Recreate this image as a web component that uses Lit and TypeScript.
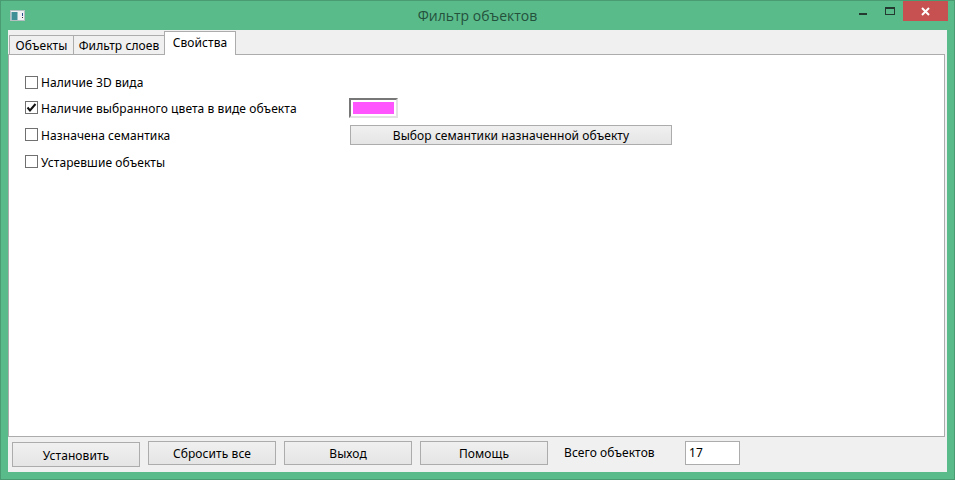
import { LitElement, html, css } from "lit";
import { customElement } from "lit/decorators.js";

@customElement("app-root")
export class AppRoot extends LitElement {
  static styles = css`
    :host { display: block; width: 955px; height: 480px; }
    * { box-sizing: border-box; }
    .win {
      width: 955px; height: 480px; background: #5abb8a; border: 1px solid #4a9a72;
      display: flex; flex-direction: column; padding: 0 7px 7px 7px;
      font-family: "Noto Sans", sans-serif; font-size: 12px; letter-spacing: 0.08px; color: #000;
    }
    .title { height: 29px; flex: none; display: flex; align-items: center; position: relative; }
    .app-icon { width: 15px; height: 11px; margin-left: 2px; margin-top: -1px; flex: none; display: block; }
    .caption {
      position: absolute; left: 0; right: 0; top: 6px; text-align: center; letter-spacing: 0;
      font-family: "Open Sans", sans-serif; font-size: 14px; line-height: 18px; color: #24513c;
    }
    .controls { position: absolute; right: -1px; top: 0; display: flex; align-items: flex-start; }
    .min { width: 8px; height: 2px; background: #243a30; margin-top: 12px; margin-right: 18px; }
    .max { width: 10px; height: 8px; border: 1px solid #243a30; border-top-width: 2px; margin-top: 6px; margin-right: 8px; }
    .close { width: 45px; height: 20px; background: #c75050; display: flex; align-items: center; justify-content: center; }
    .client { flex: 1; background: #f0f0f0; display: flex; flex-direction: column; padding: 1px 2px 0 0; }
    .tabs { display: flex; align-items: flex-end; height: 24px; flex: none; padding-left: 1px; position: relative; z-index: 1; margin-bottom: -1px; }
    .tab { height: 20px; background: #f0f0f0; border: 1px solid #acacac; display: flex; align-items: center; justify-content: center; margin-right: -1px; }
    .t1 { width: 65px; }
    .t2 { width: 92px; }
    .t3 { width: 72px; height: 24px; background: #fff; border-bottom: 0; padding-bottom: 2px; margin-right: 0; }
    .pane { height: 383px; flex: none; background: #fff; border: 1px solid #acacac; padding: 14px 0 0 16px; display: grid; grid-template-columns: 325px 322px; grid-auto-rows: min-content; align-items: center; }
    .check { display: flex; align-items: center; gap: 3px; white-space: nowrap; height: 100%; }
    .r0 { height: 27px; }
    .r1 { height: 24px; }
    .r2 { height: 30px; }
    .r3 { height: 24px; }
    .box { width: 13px; height: 13px; margin-top: -1px; border: 1px solid #707070; background: #fff; flex: none; display: flex; }
    .box svg { display: block; }
    .swatch { width: 49px; height: 20px; margin-left: -1px; border: 2px solid; border-color: #777 #e3e3e3 #e3e3e3 #777; padding: 2px; background: #fff; }
    .swatch div { width: 100%; height: 100%; background: #ff55ff; }
    button { font: inherit; letter-spacing: inherit; color: #000; border: 1px solid #acacac; background: linear-gradient(#f0f0f0, #e5e5e5); padding: 0; display: block; }
    .wide { width: 322px; height: 20px; }
    .footer { flex: 1; display: flex; align-items: flex-start; padding: 4px 0 0 4px; }
    .footer button { width: 128px; height: 24px; margin-right: 8px; padding: 0; }
    .footer .first { height: 25px; margin-top: 1px; margin-right: 8px; width: 128px; padding-top: 1px; }
    .label { margin-left: 8px; line-height: 24px; width: 121px; white-space: nowrap; }
    .input { width: 55px; height: 24px; background: #fff; border: 1px solid #acacac; padding-left: 3px; line-height: 22px; }
  `;

  private check(label: string, checked = false) {
    return html`<div class="check"><span class="box">${checked
      ? html`<svg width="11" height="11" viewBox="0 0 11 11"><path d="M1.5 5.5 L4 8.5 L9.5 2" fill="none" stroke="#111" stroke-width="2"/></svg>`
      : ""}</span><span>${label}</span></div>`;
  }

  render() {
    return html`<div class="win">
      <div class="title">
        <svg class="app-icon" viewBox="0 0 15 11">
          <rect width="15" height="11" fill="#eef0f1"/>
          <rect x="1.5" y="2" width="6" height="8" fill="#3f8f96"/>
          <rect x="0.5" y="0.5" width="14" height="10" fill="none" stroke="#b4bfc2"/>
          <rect x="12" y="3" width="1" height="3" fill="#2a4f8f"/>
          <rect x="12" y="7" width="1" height="1" fill="#333"/>
        </svg>
        <div class="caption">Фильтр объектов</div>
        <div class="controls">
          <div class="min"></div>
          <div class="max"></div>
          <div class="close"><svg width="9" height="9" viewBox="0 0 9 9"><path d="M1 1 L8 8 M8 1 L1 8" stroke="#fff" stroke-width="2" fill="none"/></svg></div>
        </div>
      </div>
      <div class="client">
        <div class="tabs">
          <div class="tab t1">Объекты</div>
          <div class="tab t2">Фильтр слоев</div>
          <div class="tab t3">Свойства</div>
        </div>
        <div class="pane">
          <div class="r0">${this.check("Наличие 3D вида")}</div><div class="r0"></div>
          <div class="r1">${this.check("Наличие выбранного цвета в виде объекта", true)}</div>
          <div class="swatch"><div></div></div>
          <div class="r2">${this.check("Назначена семантика")}</div>
          <button class="wide">Выбор семантики назначенной объекту</button>
          <div class="r3">${this.check("Устаревшие объекты")}</div><div class="r3"></div>
        </div>
        <div class="footer">
          <button class="first">Установить</button>
          <button>Сбросить все</button>
          <button>Выход</button>
          <button>Помощь</button>
          <span class="label">Всего объектов</span>
          <div class="input">17</div>
        </div>
      </div>
    </div>`;
  }
}
